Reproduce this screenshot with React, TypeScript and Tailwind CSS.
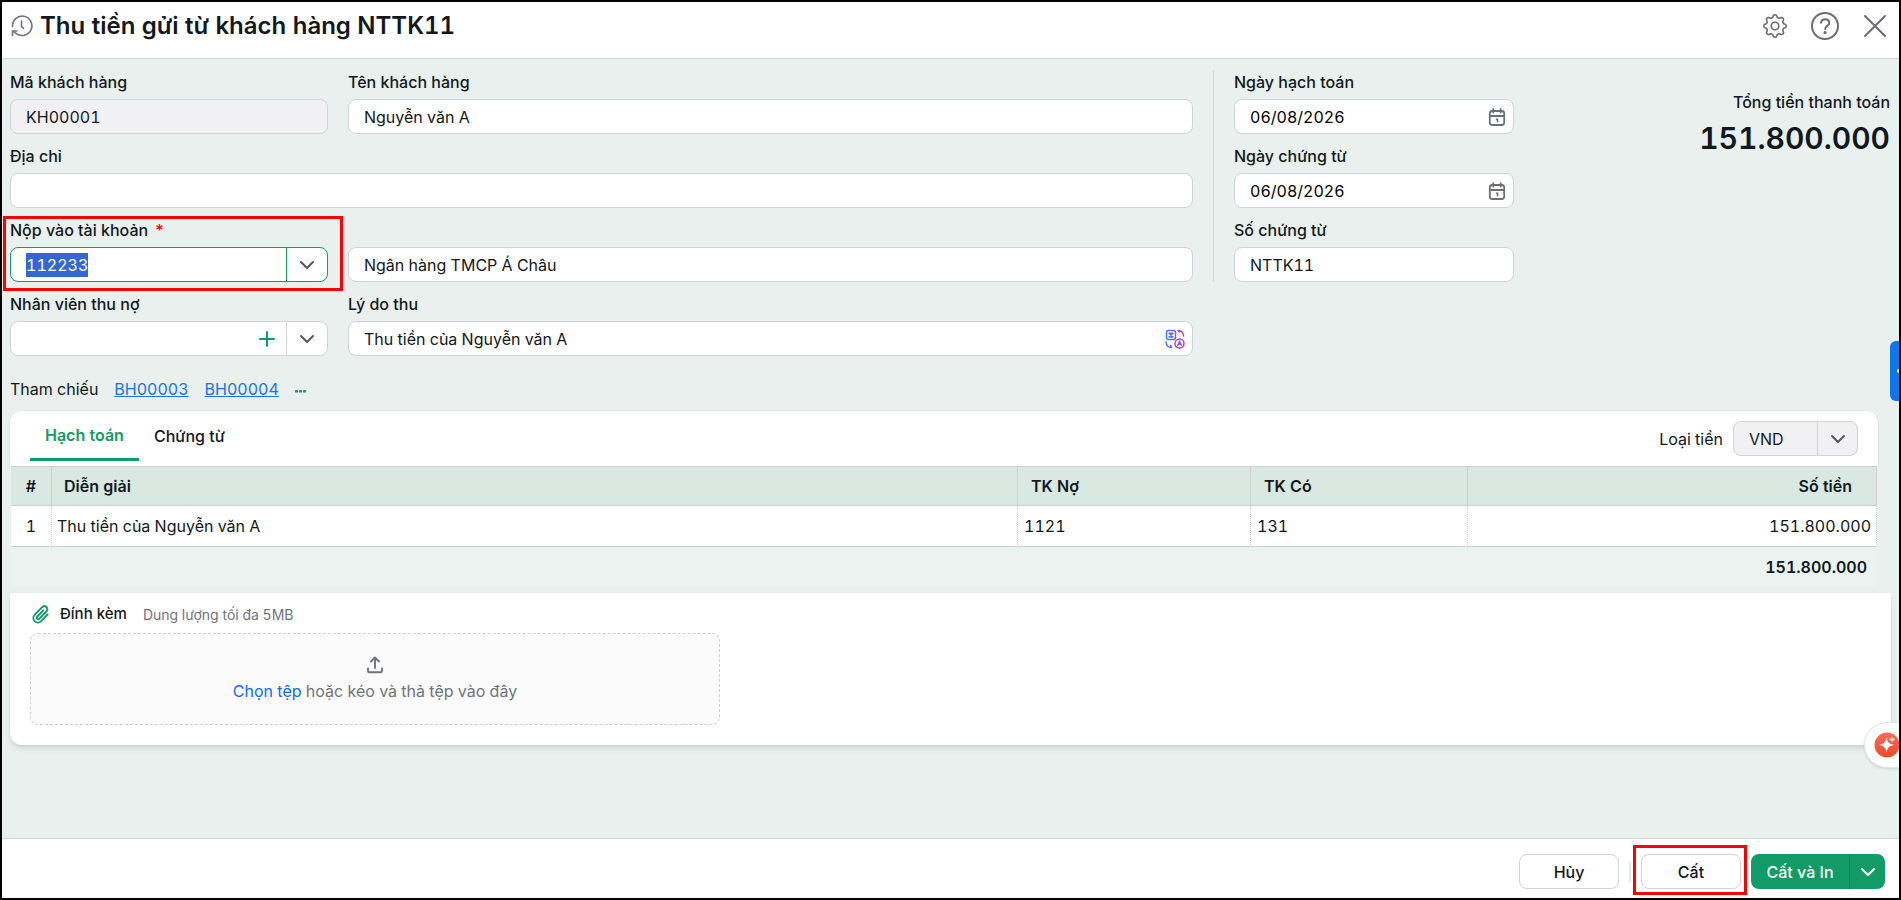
import { useEffect, useRef, type ReactNode } from "react";
import { ChevronDown, Plus } from "lucide-react";
import clsx from "clsx";

const accountingLines = [
  {
    id: 1,
    description: "Thu tiền của Nguyễn văn A",
    debit: "1121",
    credit: "131",
    amount: "151.800.000",
  },
];

const references = ["BH00003", "BH00004"];

const boxClass =
  "h-[35px] w-full rounded-lg border border-[#d0d3d8] px-[15px] text-base outline-none";

function Field({
  id,
  label,
  required,
  className,
  children,
}: {
  id: string;
  label?: string;
  required?: boolean;
  className?: string;
  children: ReactNode;
}) {
  return (
    <div className={clsx("flex flex-col justify-end", className)}>
      {label ? (
        <label htmlFor={id} className="h-[29px] leading-6 font-medium">
          {label}
          {required ? <span className="ml-[6px] text-[#ff0000]">*</span> : null}
        </label>
      ) : null}
      {children}
    </div>
  );
}

function DateField({ id, label, value }: { id: string; label: string; value: string }) {
  return (
    <Field id={id} label={label}>
      <div className="relative">
        <input id={id} defaultValue={value} className={clsx(boxClass, "bg-white text-black")} />
        <button
          type="button"
          aria-label={label}
          className="absolute inset-y-0 right-2 flex items-center text-[#6b6f76]"
        >
          <CalendarIcon />
        </button>
      </div>
    </Field>
  );
}

export default function App() {
  const accountRef = useRef<HTMLInputElement>(null);

  useEffect(() => {
    accountRef.current?.focus();
    accountRef.current?.select();
  }, []);

  return (
    <div className="relative flex min-h-screen flex-col overflow-hidden border-2 border-black bg-[#e9f0ee] font-['Inter',sans-serif] text-base text-[#111820] tabular-nums">
      <header className="flex h-[57px] items-center gap-[6px] border-b border-[#d0d5d6] bg-white pr-3 pb-2 pl-2">
        <HistoryIcon />
        <h1 className="flex-1 text-2xl font-semibold">Thu tiền gửi từ khách hàng NTTK11</h1>
        <div className="flex items-center gap-[23px] text-[#6b6c72]">
          <button type="button" aria-label="Thiết lập">
            <GearIcon />
          </button>
          <button type="button" aria-label="Trợ giúp">
            <HelpIcon />
          </button>
          <button type="button" aria-label="Đóng">
            <CloseIcon />
          </button>
        </div>
      </header>

      <main className="flex-1 px-2">
        <form className="flex items-start pt-[11px]">
          <div className="flex flex-1 flex-col gap-[10px]">
            <div className="flex gap-5">
              <Field id="customer-code" label="Mã khách hàng" className="w-[318px]">
                <input
                  id="customer-code"
                  readOnly
                  defaultValue="KH00001"
                  className={clsx(boxClass, "bg-[#f1f1f4]")}
                />
              </Field>
              <Field id="customer-name" label="Tên khách hàng" className="flex-1">
                <input
                  id="customer-name"
                  defaultValue="Nguyễn văn A"
                  className={clsx(boxClass, "bg-white")}
                />
              </Field>
            </div>
            <Field id="address" label="Địa chỉ">
              <input id="address" className={clsx(boxClass, "bg-white")} />
            </Field>
            <div className="flex gap-5">
              <div className="relative w-[318px]">
                <Field id="account" label="Nộp vào tài khoản" required>
                  <div className="flex h-[35px] overflow-hidden rounded-lg border border-[#119b66] bg-white">
                    <input
                      ref={accountRef}
                      id="account"
                      defaultValue="112233"
                      className="min-w-0 flex-1 px-[15px] outline-none selection:bg-[#3367d1] selection:text-white"
                    />
                    <button
                      type="button"
                      aria-label="Chọn tài khoản"
                      className="flex w-[41px] items-center justify-center border-l border-[#119b66] text-[#55585e]"
                    >
                      <ChevronDown size={24} />
                    </button>
                  </div>
                </Field>
                <div className="pointer-events-none absolute -top-[2px] -right-[15px] -bottom-[9px] -left-[7px] border-3 border-[#ff0000]" />
              </div>
              <Field id="bank-name" className="flex-1">
                <input
                  id="bank-name"
                  aria-label="Ngân hàng"
                  defaultValue="Ngân hàng TMCP Á Châu"
                  className={clsx(boxClass, "bg-white")}
                />
              </Field>
            </div>
            <div className="flex gap-5">
              <Field id="employee" label="Nhân viên thu nợ" className="w-[318px]">
                <div className="flex h-[35px] overflow-hidden rounded-lg border border-[#d0d3d8] bg-white">
                  <input id="employee" className="min-w-0 flex-1 px-[15px] outline-none" />
                  <button
                    type="button"
                    aria-label="Thêm nhân viên"
                    className="flex w-[38px] items-center justify-center text-[#119b66]"
                  >
                    <Plus size={24} />
                  </button>
                  <button
                    type="button"
                    aria-label="Chọn nhân viên"
                    className="flex w-[41px] items-center justify-center border-l border-[#d0d3d8] text-[#55585e]"
                  >
                    <ChevronDown size={24} />
                  </button>
                </div>
              </Field>
              <Field id="reason" label="Lý do thu" className="flex-1">
                <div className="relative">
                  <input
                    id="reason"
                    defaultValue="Thu tiền của Nguyễn văn A"
                    className={clsx(boxClass, "bg-white")}
                  />
                  <button
                    type="button"
                    aria-label="Dịch"
                    className="absolute inset-y-0 right-2 flex items-center"
                  >
                    <TranslateIcon />
                  </button>
                </div>
              </Field>
            </div>
          </div>

          <div className="ml-5 flex w-[301px] flex-col gap-[10px] border-l border-[#d0d5d6] pl-5">
            <DateField id="posting-date" label="Ngày hạch toán" value="06/08/2026" />
            <DateField id="voucher-date" label="Ngày chứng từ" value="06/08/2026" />
            <Field id="voucher-number" label="Số chứng từ">
              <input
                id="voucher-number"
                defaultValue="NTTK11"
                className={clsx(boxClass, "bg-white")}
              />
            </Field>
          </div>

          <div className="w-[377px] pt-5 pr-px text-right">
            <p className="leading-6 font-medium">Tổng tiền thanh toán</p>
            <p className="mt-[6px] text-[30px] leading-9 font-semibold">151.800.000</p>
          </div>
        </form>

        <div className="mt-[21px] flex h-6 items-center gap-4">
          <span>Tham chiếu</span>
          {references.map((code) => (
            <a key={code} href={`#${code}`} className="text-[#1a73e8] underline">
              {code}
            </a>
          ))}
          <button type="button" aria-label="Thêm tham chiếu" className="text-[#119b66]">
            <DotsIcon />
          </button>
        </div>

        <section className="mt-[10px] mr-[13px]">
          <div className="flex h-[55px] items-center justify-between rounded-t-xl bg-white px-5 shadow-sm">
            <div role="tablist" className="flex h-full items-start">
              <button
                type="button"
                role="tab"
                aria-selected="true"
                className="h-[50px] border-b-3 border-[#119b66] px-[15px] font-semibold text-[#119b66]"
              >
                Hạch toán
              </button>
              <button
                type="button"
                role="tab"
                aria-selected="false"
                className="h-[50px] px-[15px] font-medium"
              >
                Chứng từ
              </button>
            </div>
            <div className="flex items-center gap-[10px]">
              <label htmlFor="currency">Loại tiền</label>
              <div className="relative">
                <select
                  id="currency"
                  defaultValue="VND"
                  className="h-[35px] w-[125px] appearance-none rounded-lg border border-[#d0d3d8] bg-[#f1f1f4] px-[15px] outline-none"
                >
                  <option>VND</option>
                </select>
                <span className="pointer-events-none absolute inset-y-px right-px flex w-[40px] items-center justify-center border-l border-[#d0d3d8] text-[#55585e]">
                  <ChevronDown size={24} />
                </span>
              </div>
            </div>
          </div>
          <div className="relative bg-[#e9f0ee] px-px">
            <table className="w-full table-fixed border-separate border-spacing-0 bg-[#ebf3f0]">
              <thead>
                <tr className="h-[40px] bg-[#d9e8e1] text-left [&>th]:border-y [&>th]:border-r [&>th]:border-[#cbd0d5] [&>th]:font-semibold">
                  <th className="w-[41px] text-center">#</th>
                  <th className="px-3">Diễn giải</th>
                  <th className="w-[233px] px-[13px]">TK Nợ</th>
                  <th className="w-[217px] px-[13px]">TK Có</th>
                  <th className="w-[409px] pr-6 text-right">Số tiền</th>
                </tr>
              </thead>
              <tbody>
                {accountingLines.map((line) => (
                  <tr
                    key={line.id}
                    className="h-[41px] bg-white [&>td]:border-r [&>td]:border-b [&>td]:border-[#cbd0d5] [&>td]:[border-right-style:dotted]"
                  >
                    <td className="text-center">{line.id}</td>
                    <td className="px-[5px]">{line.description}</td>
                    <td className="px-[6px]">{line.debit}</td>
                    <td className="px-[6px]">{line.credit}</td>
                    <td className="px-[5px] text-right">{line.amount}</td>
                  </tr>
                ))}
              </tbody>
              <tfoot>
                <tr className="h-[40px]">
                  <td colSpan={5} className="pr-[10px] text-right font-semibold">
                    151.800.000
                  </td>
                </tr>
              </tfoot>
            </table>
          </div>
        </section>

        <section className="mt-[6px] rounded-b-xl bg-white px-5 pt-[9px] pb-5 shadow-md">
          <div className="flex h-6 items-center">
            <PaperclipIcon />
            <h2 className="ml-[10px] text-[15px] font-medium">Đính kèm</h2>
            <span className="ml-4 text-[14px] text-[#6f747c]">Dung lượng tối đa 5MB</span>
          </div>
          <label className="mt-[7px] flex h-[92px] w-[690px] cursor-pointer flex-col items-center justify-center gap-1 rounded-lg border border-dashed border-[#cdd0d4] bg-[#fbfbfb] text-[#6f747c]">
            <input type="file" className="sr-only" />
            <UploadIcon />
            <span>
              <span className="text-[#0f6bef]">Chọn tệp</span> hoặc kéo và thả tệp vào đây
            </span>
          </label>
        </section>
      </main>

      <footer className="flex h-[60px] items-start justify-end border-t border-[#d0d5d6] bg-white pt-[15px] pr-[14px] font-medium">
        <button type="button" className="h-[35px] w-[100px] rounded-lg border border-[#d0d3d8]">
          Hủy
        </button>
        <div className="mx-[10px] mt-2 h-5 w-[2px] bg-[#e4e6e9]" />
        <div className="relative">
          <button type="button" className="h-[35px] w-[100px] rounded-lg border border-[#d0d3d8]">
            Cất
          </button>
          <div className="pointer-events-none absolute -top-[9px] -right-[6px] -bottom-[6px] -left-2 border-3 border-[#ff0000]" />
        </div>
        <div className="ml-[10px] flex h-[35px] overflow-hidden rounded-lg bg-[#119b66] text-white">
          <button type="button" className="w-[98px]">
            Cất và In
          </button>
          <button
            type="button"
            aria-label="Tùy chọn khác"
            className="flex w-[36px] items-center justify-center border-l border-[#0d8457]"
          >
            <ChevronDown size={24} />
          </button>
        </div>
      </footer>

      <button
        type="button"
        aria-label="Mở bảng bên"
        className="absolute top-[339px] right-0 h-[60px] w-[9px] overflow-hidden rounded-l-md bg-[#0a78ea]"
      >
        <span className="absolute top-[28px] -right-[2px] size-1 rounded-full bg-white" />
      </button>
      <button
        type="button"
        aria-label="Trợ lý"
        className="absolute top-[720px] -right-px flex h-[46px] w-[36px] items-center rounded-l-full border border-[#e3e5e8] bg-white pl-[9px] shadow-sm"
      >
        <SparkIcon />
      </button>
    </div>
  );
}

function HistoryIcon() {
  return (
    <svg
      width="24"
      height="24"
      viewBox="0 0 24 24"
      fill="none"
      stroke="#71747c"
      strokeWidth="1.6"
      strokeLinecap="round"
      strokeLinejoin="round"
    >
      <path d="M2.5 12.500a9.700 9.700 0 1 1 3.500 6.800L2.800 17.200" />
      <path d="M2.500 21.500V17H7" />
      <path d="M11.500 7v5.500l2 1.800" />
    </svg>
  );
}

// Eight rounded teeth on a wavy ring
const gearPoints = Array.from({ length: 96 }, (_, i) => {
  const angle = (i / 96) * Math.PI * 2;
  const wave = Math.cos(angle * 8);
  const radius = 9.9 + 1.3 * Math.tanh(wave * 1.8);
  return `${(12 + radius * Math.sin(angle)).toFixed(2)},${(12 - radius * Math.cos(angle)).toFixed(2)}`;
}).join(" ");

function GearIcon() {
  return (
    <svg
      width="24"
      height="24"
      viewBox="0 0 24 24"
      fill="none"
      stroke="currentColor"
      strokeWidth="1.6"
      strokeLinejoin="round"
    >
      <polygon points={gearPoints} />
      <circle cx="12" cy="12" r="3.800" />
    </svg>
  );
}

function HelpIcon() {
  return (
    <svg
      width="30"
      height="30"
      viewBox="0 0 30 30"
      fill="none"
      stroke="currentColor"
      strokeWidth="2"
      strokeLinecap="round"
    >
      <circle cx="15" cy="15" r="13" />
      <path d="M11 11.800c.5-2.500 2-3.500 4.200-3.500 2.300 0 4 1.300 4 3.500 0 3.200-4 3-4 6.200" />
      <circle cx="15.100" cy="21.600" r=".7" fill="currentColor" />
    </svg>
  );
}

function CloseIcon() {
  return (
    <svg
      width="24"
      height="24"
      viewBox="0 0 24 24"
      fill="none"
      stroke="currentColor"
      strokeWidth="2"
      strokeLinecap="round"
    >
      <path d="m2 2 20 20M22 2 2 22" />
    </svg>
  );
}

function CalendarIcon() {
  return (
    <svg
      width="18"
      height="18"
      viewBox="0 0 18 18"
      fill="none"
      stroke="currentColor"
      strokeWidth="1.8"
      strokeLinecap="round"
    >
      <rect x="1.800" y="3" width="14.400" height="14" rx="2.500" />
      <path d="M1.800 8h14.400M5.300 1.200v3.300M12.700 1.200v3.300" />
      <path d="M8.500 11.300h1v2.500" strokeWidth="1.600" />
    </svg>
  );
}

function TranslateIcon() {
  return (
    <svg
      width="20"
      height="20"
      viewBox="0 0 20 20"
      fill="none"
      stroke="url(#translate-gradient)"
      strokeWidth="1.5"
      strokeLinecap="round"
    >
      <defs>
        <linearGradient id="translate-gradient" x1="0" y1="0" x2="20" y2="0" gradientUnits="userSpaceOnUse">
          <stop stopColor="#2f80ff" />
          <stop offset="1" stopColor="#d52ff0" />
        </linearGradient>
      </defs>
      <rect x="1.500" y="1.500" width="9" height="9" rx="2" />
      <path d="M4 4.200h4M4 8h4M4.500 4.200 7.500 8M7.500 4.200 4.500 8" />
      <circle cx="14.500" cy="14.500" r="4.500" />
      <path d="m12.800 16.200 1.700-3.700 1.700 3.700M13.500 15.200h2" />
      <path d="M13 1.500c3 .2 5.300 2.500 5.500 5.500M13 1.500l1.500 1.500M1 13c.2 3 2.500 5.300 5.500 5.500M6.500 18.500 5.500 16.500" />
    </svg>
  );
}

function DotsIcon() {
  return (
    <svg width="11" height="12" viewBox="0 0 11 12" fill="currentColor">
      <rect x="0" y="7" width="3" height="2.500" rx=".5" />
      <rect x="4" y="7" width="3" height="2.500" rx=".5" />
      <rect x="8" y="7" width="3" height="2.500" rx=".5" />
    </svg>
  );
}

function PaperclipIcon() {
  return (
    <svg
      width="20"
      height="20"
      viewBox="0 0 20 20"
      fill="none"
      stroke="#119b66"
      strokeWidth="1.9"
      strokeLinecap="round"
      strokeLinejoin="round"
    >
      <path d="m17.500 10.500-6 6.300c-2 2-4.800 2.300-6.700.6-2-1.900-1.900-4.800 0-6.800L12 3.300c1.300-1.300 3.200-1.500 4.400-.3 1.300 1.200 1.200 3.100-.1 4.500l-6.800 7.100c-.7.700-1.600.800-2.300.2-.7-.700-.600-1.600.1-2.300l6-6.200" />
    </svg>
  );
}

function UploadIcon() {
  return (
    <svg
      width="18"
      height="20"
      viewBox="0 0 18 20"
      fill="none"
      stroke="#6f747c"
      strokeWidth="1.9"
      strokeLinecap="round"
      strokeLinejoin="round"
    >
      <path d="M9 13V3M5 6.500 9 2.500l4 4M2 13.500v2.500c0 .8.500 1.300 1.300 1.300h11.400c.8 0 1.300-.5 1.300-1.300v-2.500" />
    </svg>
  );
}

function SparkIcon() {
  return (
    <svg width="26" height="26" viewBox="0 0 26 26" className="shrink-0">
      <defs>
        <linearGradient id="spark-gradient" x1="0" y1="0" x2="0" y2="1">
          <stop stopColor="#ff6a55" />
          <stop offset="1" stopColor="#f44725" />
        </linearGradient>
      </defs>
      <circle cx="13" cy="13" r="12.500" fill="url(#spark-gradient)" />
      <path
        d="M12.500 5.500c1 4.800 2.700 6.500 7.500 7.500-4.800 1-6.500 2.700-7.500 7.500-1-4.800-2.700-6.500-7.500-7.500 4.800-1 6.500-2.700 7.500-7.500Z"
        fill="#fff"
      />
      <path d="M18 5v5M15.500 7.500h5" stroke="#fff" strokeWidth="1.300" />
    </svg>
  );
}
